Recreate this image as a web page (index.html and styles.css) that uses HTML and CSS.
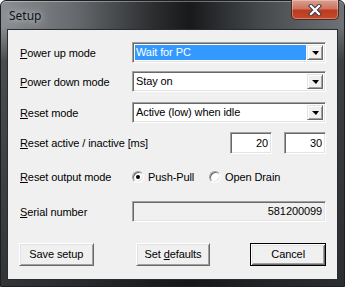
FILE: index.html
```html
<!DOCTYPE html>
<html lang="en">
<head>
  <meta charset="UTF-8" />
  <title>Setup</title>
  <link rel="stylesheet" href="styles.css">
</head>
<body>
  <div class="window">
    <div class="titlebar">
      <span class="title">Setup</span>
      <div class="close">
        <svg width="14" height="12" viewBox="0 0 14 12">
          <path d="M3 2 L11 10 M11 2 L3 10" stroke="#3a3f4a" stroke-width="4.2" stroke-linecap="square"/>
          <path d="M3 2 L11 10 M11 2 L3 10" stroke="#fff" stroke-width="2.2" stroke-linecap="square"/>
        </svg>
      </div>
    </div>

    <div class="client">
      <div class="row r1">
        <label class="lbl"><u>P</u>ower up mode</label>
        <div class="combo">
          <span class="value selected">Wait for PC</span>
          <span class="drop"><i></i></span>
        </div>
      </div>
      <div class="row r2">
        <label class="lbl"><u>P</u>ower down mode</label>
        <div class="combo">
          <span class="value">Stay on</span>
          <span class="drop"><i></i></span>
        </div>
      </div>
      <div class="row r3">
        <label class="lbl"><u>R</u>eset mode</label>
        <div class="combo">
          <span class="value">Active (low) when idle</span>
          <span class="drop"><i></i></span>
        </div>
      </div>
      <div class="row r4">
        <label class="lbl"><u>R</u>eset active / inactive [ms]</label>
        <div class="pair">
          <div class="edit">20</div>
          <div class="edit">30</div>
        </div>
      </div>
      <div class="row r5">
        <label class="lbl"><u>R</u>eset output mode</label>
        <div class="radios">
          <span class="radio first"><span class="dot checked"></span>Push-Pull</span>
          <span class="radio"><span class="dot"></span>Open Drain</span>
        </div>
      </div>
      <div class="row r6">
        <label class="lbl"><u>S</u>erial number</label>
        <div class="edit readonly">581200099</div>
      </div>

      <div class="buttons">
        <div class="btn save">Save setup</div>
        <div class="btn defaults">Set <u>d</u>efaults</div>
        <div class="btn cancel">Cancel</div>
      </div>
    </div>
  </div>
</body>
</html>
```

FILE: styles.css
```css
* {
  margin: 0;
  padding: 0;
  box-sizing: border-box;
}
body {
  width: 345px;
  height: 287px;
  overflow: hidden;
  background: #fff;
  font-family: 'Liberation Sans', Arial, sans-serif;
  font-size: 11px;
  letter-spacing: -0.1px;
  color: #000;
}
.window {
  width: 345px;
  height: 287px;
  border: 1px solid #1c1e20;
  border-radius: 6px 6px 0 0;
  background:
    linear-gradient(180deg, rgba(20,22,24,0) 0, rgba(20,22,24,0) 26px, rgba(20,22,24,0.55) 60px, rgba(20,22,24,0.75) 100%),
    linear-gradient(90deg, #8c8f93 0%, #65686c 22%, #2a2c2e 45%, #17191b 55%, #45484b 75%, #6f7276 100%);
  box-shadow: inset 0 1px rgba(255,255,255,0.35);
  padding: 0 6px 6px;
  display: flex;
  flex-direction: column;
}
.titlebar {
  height: 28px;
  display: flex;
  align-items: flex-start;
}
.title {
  padding: 6px 0 0 2px;
  font-family: 'Noto Sans', sans-serif;
  font-size: 12px;
  letter-spacing: 0;
  color: #0c1420;
  text-shadow: 0 0 6px #c8cacc, 0 0 10px #b0b2b4;
}
.close {
  margin-left: auto;
  margin-right: -1px;
  margin-top: -1px;
  width: 48px;
  height: 20px;
  border: 1px solid #4a2a24;
  border-top: none;
  border-radius: 0 0 5px 5px;
  background: linear-gradient(180deg, #dca08f 0%, #cd7560 45%, #bd3a1e 55%, #c44a2c 100%);
  box-shadow: inset 0 0 0 1px rgba(255,255,255,0.3);
  display: flex;
  justify-content: center;
  align-items: center;
}
.client {
  flex: 1;
  border: 1px solid #2a2d30;
  background: #f0f0f0;
  padding: 12px 11px 0 12px;
}
.row {
  display: grid;
  grid-template-columns: 112px 194px;
  align-items: center;
  height: 21px;
}
.r2 { margin-top: 8px; }
.r3 { margin-top: 10px; }
.r4 { margin-top: 9px; height: 22px; }
.r5 { margin-top: 12px; }
.r6 { margin-top: 14px; }
.lbl {
  white-space: nowrap;
}
.combo {
  height: 21px;
  display: flex;
  border: 1px solid;
  border-color: #a0a0a0 #fff #fff #a0a0a0;
  box-shadow: inset 1px 1px #696969, inset -1px -1px #e3e3e3;
  background: #fff;
  padding: 2px;
}
.value {
  flex: 1;
  padding-left: 1px;
  line-height: 15px;
}
.value.selected {
  background: #3399ff;
  color: #fff;
}
.drop {
  width: 16px;
  margin-left: 1px;
  background: #f0f0f0;
  border: 1px solid;
  border-color: #e3e3e3 #696969 #696969 #e3e3e3;
  box-shadow: inset 1px 1px #fff, inset -1px -1px #a0a0a0;
  display: flex;
  justify-content: center;
  align-items: center;
}
.drop i {
  width: 0;
  height: 0;
  border-left: 4px solid transparent;
  border-right: 3px solid transparent;
  border-top: 4px solid #000;
  margin-top: 1px;
}
.pair {
  display: flex;
  justify-content: flex-end;
  gap: 12px;
}
.edit {
  width: 42px;
  height: 22px;
  border: 1px solid;
  border-color: #a0a0a0 #fff #fff #a0a0a0;
  box-shadow: inset 1px 1px #696969, inset -1px -1px #e3e3e3;
  background: #fff;
  text-align: right;
  padding: 0 3px;
  line-height: 20px;
}
.edit.readonly {
  width: 194px;
  height: 21px;
  background: #f0f0f0;
  line-height: 19px;
}
.radios {
  display: flex;
  align-items: center;
}
.radio {
  display: flex;
  align-items: center;
}
.radio.first {
  width: 77px;
}
.dot {
  width: 12px;
  height: 12px;
  border-radius: 50%;
  border: 1px solid;
  border-color: #a0a0a0 #fff #fff #a0a0a0;
  box-shadow: inset 1px 1px #696969, inset -1px -1px #e3e3e3;
  background: #fff;
  margin-right: 4px;
  display: flex;
  justify-content: center;
  align-items: center;
}
.dot.checked::after {
  content: '';
  width: 4px;
  height: 4px;
  border-radius: 50%;
  background: #000;
}
.buttons {
  display: flex;
  margin-top: 21px;
  margin-left: -1px;
}
.btn {
  width: 75px;
  height: 23px;
  border: 1px solid;
  border-color: #fff #696969 #696969 #fff;
  box-shadow: inset 1px 1px #e3e3e3, inset -1px -1px #a0a0a0;
  background: #f0f0f0;
  text-align: center;
  line-height: 21px;
}
.defaults {
  margin-left: 42px;
}
.cancel {
  margin-left: 40px;
  width: 76px;
  border: 1px solid #000;
  box-shadow: inset 1px 1px #fff, inset -1px -1px #696969, inset 2px 2px #e3e3e3, inset -2px -2px #a0a0a0;
}
```
